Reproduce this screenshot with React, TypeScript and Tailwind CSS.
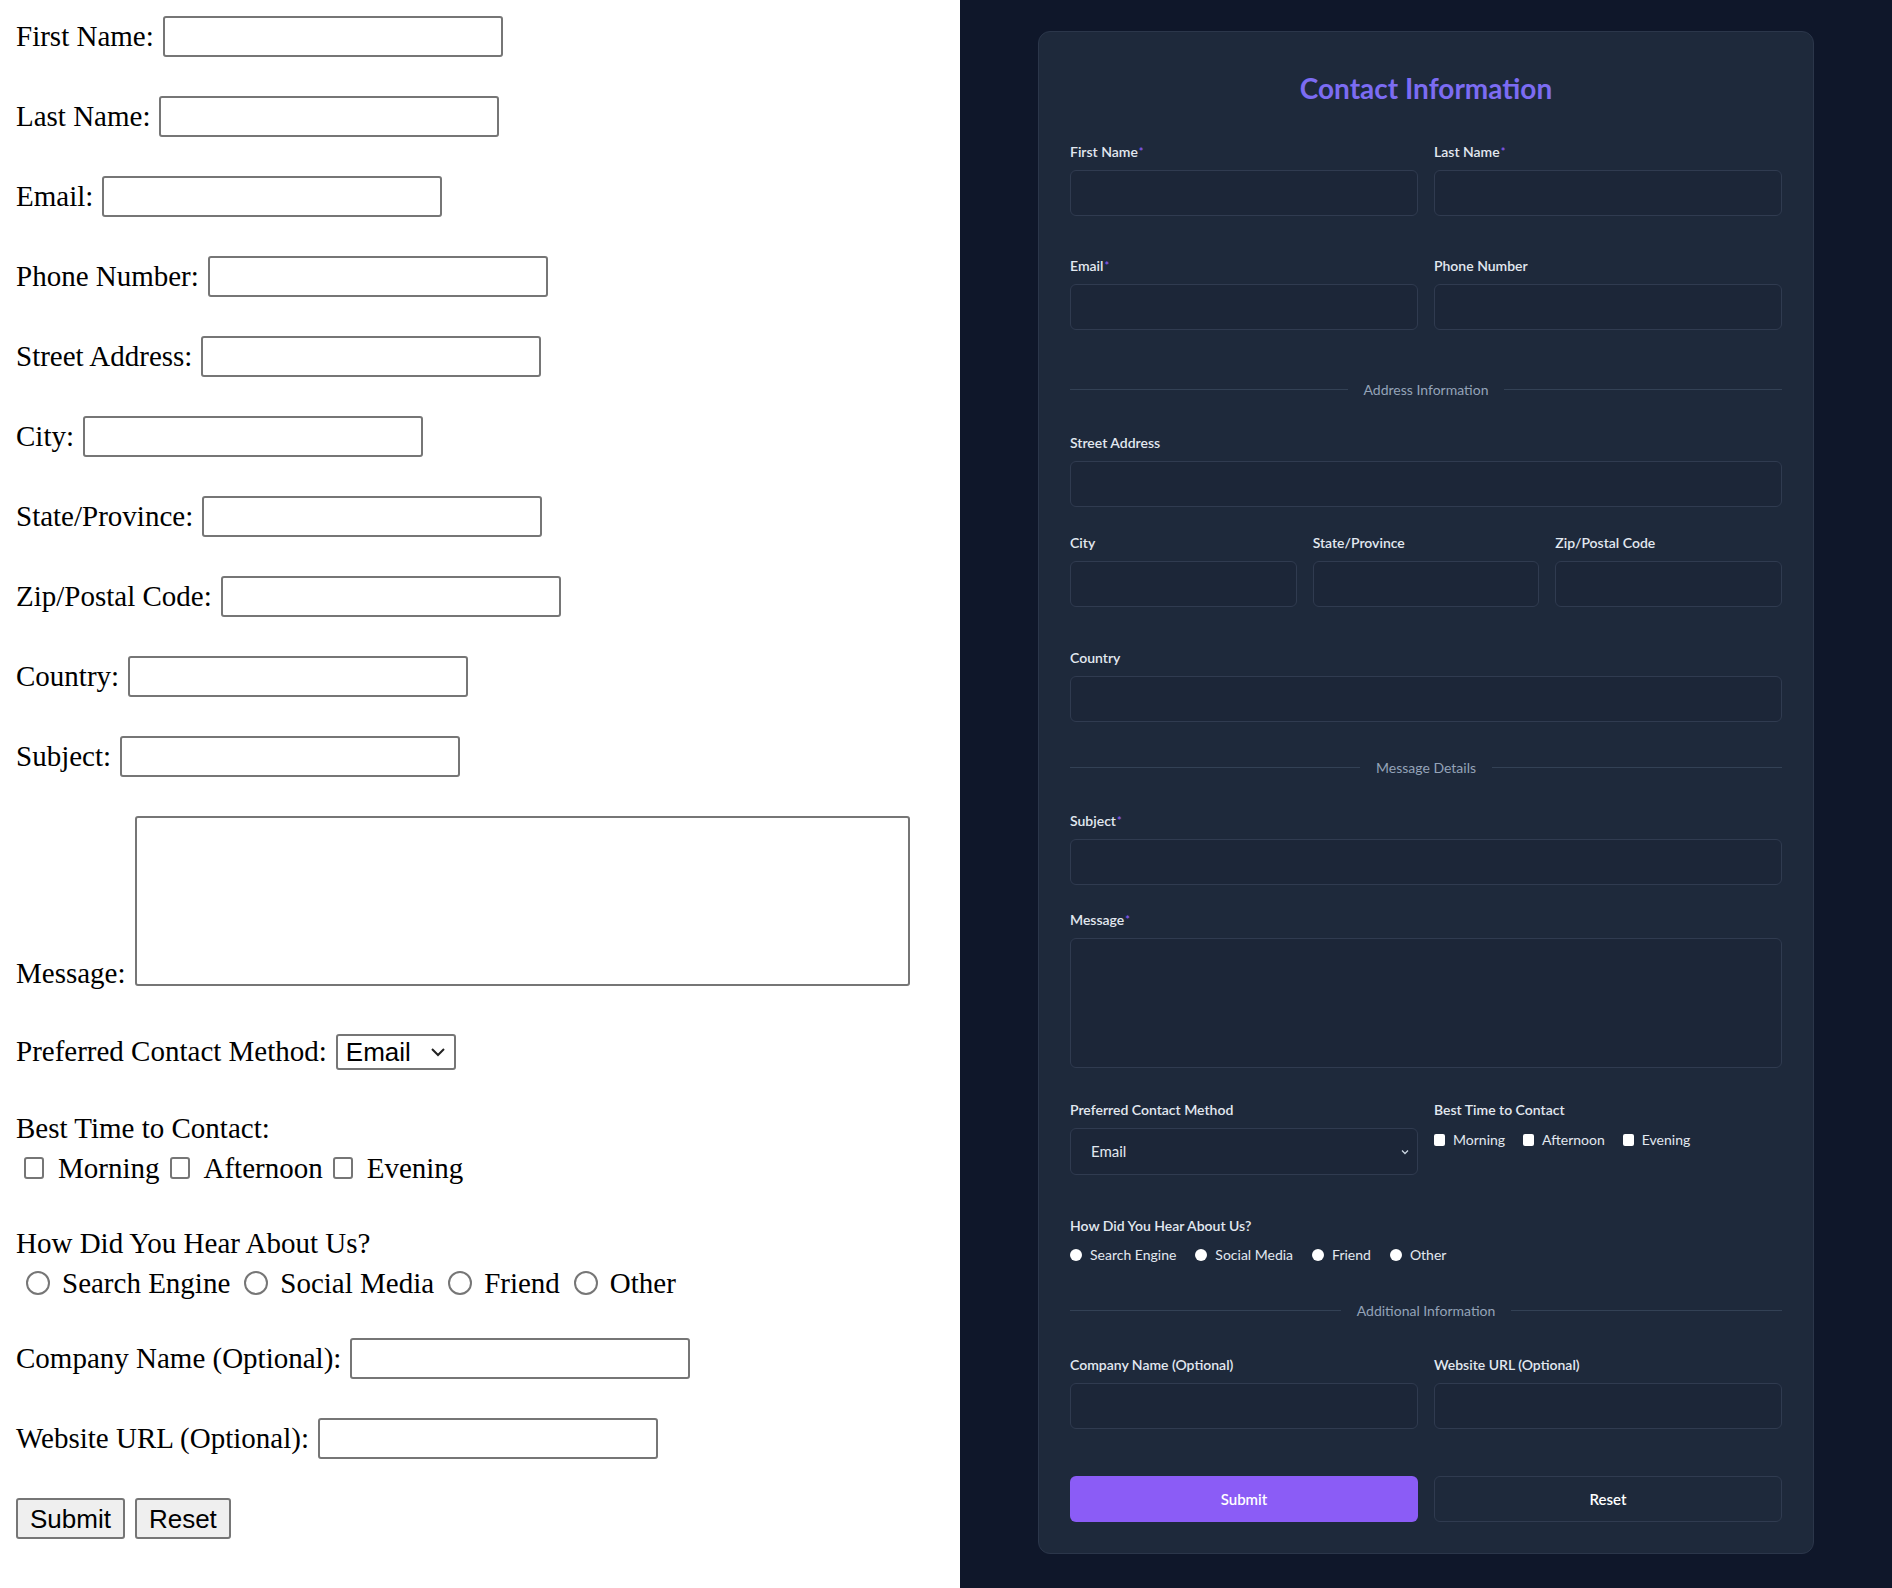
import React from "react";

const serif = { fontFamily: '"Liberation Serif", "Times New Roman", serif' };

function PlainRow({ label, width = 340, className = "" }: { label: string; width?: number; className?: string }) {
  return (
    <div className={`flex items-center h-[41px] mb-[39px] ${className}`}>
      <span className="text-[29px] text-black mr-[9px] whitespace-nowrap">{label}</span>
      <input className="h-[41px] border-2 border-[#767676] rounded-[3px] bg-white" style={{ width }} />
    </div>
  );
}

function PlainForm() {
  const rows = [
    "First Name:",
    "Last Name:",
    "Email:",
    "Phone Number:",
    "Street Address:",
    "City:",
    "State/Province:",
    "Zip/Postal Code:",
    "Country:",
    "Subject:",
  ];
  return (
    <div className="w-[960px] shrink-0 bg-white pl-[16px] pt-[16px] text-black" style={serif}>
      {rows.map((r) => (
        <PlainRow key={r} label={r} />
      ))}
      <div className="flex items-end mt-[1px]">
        <span className="text-[29px] mr-[9px] leading-[34px] mb-[-4px]">Message:</span>
        <textarea className="w-[775px] h-[170px] border-2 border-[#767676] rounded-[3px] resize-none" />
      </div>
      <div className="flex items-center mt-[48px] h-[36px]">
        <span className="text-[29px] mr-[9px]">Preferred Contact Method:</span>
        <div
          className="h-[36px] w-[120px] border-2 border-[#767676] rounded-[3px] flex items-center justify-between px-[8px] text-[26px]"
          style={{ fontFamily: '"Liberation Sans", Arial, sans-serif' }}
        >
          <span>Email</span>
          <svg width="16" height="10" viewBox="0 0 16 10" fill="none" stroke="#222" strokeWidth="2">
            <path d="M2 2l6 6 6-6" />
          </svg>
        </div>
      </div>
      <div className="mt-[38px] text-[29px] leading-[40px]">Best Time to Contact:</div>
      <div className="flex items-center text-[29px] leading-[40px]">
        {["Morning", "Afternoon", "Evening"].map((t) => (
          <span key={t} className="flex items-center">
            <span className="inline-block w-[20px] h-[22px] border-2 border-[#767676] rounded-[3px] ml-[8px] mr-[14px]" />
            <span className="mr-[2px]">{t}</span>
          </span>
        ))}
      </div>
      <div className="mt-[35px] text-[29px] leading-[40px]">How Did You Hear About Us?</div>
      <div className="flex items-center text-[29px] leading-[40px]">
        {["Search Engine", "Social Media", "Friend", "Other"].map((t) => (
          <span key={t} className="flex items-center">
            <span className="inline-block w-[24px] h-[24px] border-2 border-[#767676] rounded-full ml-[10px] mr-[12px]" />
            <span className="mr-[4px]">{t}</span>
          </span>
        ))}
      </div>
      <div className="mt-[35px]">
        <PlainRow label="Company Name (Optional):" />
        <PlainRow label="Website URL (Optional):" />
      </div>
      <div className="flex gap-[10px] mt-[0px]" style={{ fontFamily: '"Liberation Sans", Arial, sans-serif' }}>
        <button className="h-[41px] px-[12px] border-2 border-[#767676] rounded-[3px] bg-[#efefef] text-[26px]">Submit</button>
        <button className="h-[41px] px-[12px] border-2 border-[#767676] rounded-[3px] bg-[#efefef] text-[26px]">Reset</button>
      </div>
    </div>
  );
}

function Label({ text, req = false }: { text: string; req?: boolean }) {
  return (
    <div className="h-[20px] leading-[20px] text-[14px] font-semibold text-[#e2e8f0] mb-[8px]">
      {text}
      {req && <span className="text-[#8b5cf6] text-[11px] align-top ml-[1px]">*</span>}
    </div>
  );
}

function Field({ text, req = false, h = 46 }: { text: string; req?: boolean; h?: number }) {
  return (
    <div className="flex flex-col">
      <Label text={text} req={req} />
      <div className="w-full rounded-[6px] border border-[#303b50] bg-[#1c2638]" style={{ height: h }} />
    </div>
  );
}

function Divider({ text, className = "" }: { text: string; className?: string }) {
  return (
    <div className={`flex items-center h-[20px] ${className}`}>
      <div className="flex-1 h-px bg-[#334155]" />
      <span className="px-[16px] text-[14px] text-[#94a3b8]">{text}</span>
      <div className="flex-1 h-px bg-[#334155]" />
    </div>
  );
}

function DarkForm() {
  return (
    <div className="flex-1 bg-[#0f172a] min-h-[1588px] pt-[31px] pl-[78px]">
      <div
        className="w-[776px] rounded-[12px] border border-[#2b364a] bg-[#1e293b] px-[31px] pt-[38px] pb-[31px] flex flex-col"
        style={{ fontFamily: 'Lato, "Noto Sans", sans-serif' }}
      >
        <h1 className="text-center text-[28px] leading-[36px] font-bold text-[#7c6cf2]">Contact Information</h1>
        <div className="grid grid-cols-2 gap-x-[16px] gap-y-[40px] mt-[36px]">
          <Field text="First Name" req />
          <Field text="Last Name" req />
          <Field text="Email" req />
          <Field text="Phone Number" />
        </div>
        <Divider text="Address Information" className="mt-[49px]" />
        <div className="mt-[34px]">
          <Field text="Street Address" />
        </div>
        <div className="grid grid-cols-3 gap-x-[16px] mt-[26px]">
          <Field text="City" />
          <Field text="State/Province" />
          <Field text="Zip/Postal Code" />
        </div>
        <div className="mt-[41px]">
          <Field text="Country" />
        </div>
        <Divider text="Message Details" className="mt-[35px]" />
        <div className="mt-[34px]">
          <Field text="Subject" req />
        </div>
        <div className="mt-[25px]">
          <Field text="Message" req h={130} />
        </div>
        <div className="grid grid-cols-2 gap-x-[16px] mt-[32px]">
          <div className="flex flex-col">
            <Label text="Preferred Contact Method" />
            <div className="h-[47px] rounded-[6px] border border-[#303b50] bg-[#1c2638] flex items-center justify-between pl-[20px] pr-[8px] text-[15px] text-[#e2e8f0]">
              <span>Email</span>
              <svg width="8" height="6" viewBox="0 0 8 6" fill="none" stroke="#cbd5e1" strokeWidth="1.3">
                <path d="M1 1.5l3 3 3-3" />
              </svg>
            </div>
          </div>
          <div className="flex flex-col">
            <Label text="Best Time to Contact" />
            <div className="flex items-center gap-[18px] text-[14px] text-[#e2e8f0] mt-[1px]">
              {["Morning", "Afternoon", "Evening"].map((t) => (
                <span key={t} className="flex items-center gap-[8px]">
                  <span className="w-[11px] h-[12px] bg-white rounded-[2px]" />
                  {t}
                </span>
              ))}
            </div>
          </div>
        </div>
        <div className="mt-[41px]">
          <Label text="How Did You Hear About Us?" />
          <div className="flex items-center gap-[19px] text-[14px] text-[#e2e8f0] mt-[2px]">
            {["Search Engine", "Social Media", "Friend", "Other"].map((t) => (
              <span key={t} className="flex items-center gap-[8px]">
                <span className="w-[12px] h-[12px] bg-white rounded-full" />
                {t}
              </span>
            ))}
          </div>
        </div>
        <Divider text="Additional Information" className="mt-[35px]" />
        <div className="grid grid-cols-2 gap-x-[16px] mt-[35px]">
          <Field text="Company Name (Optional)" />
          <Field text="Website URL (Optional)" />
        </div>
        <div className="grid grid-cols-2 gap-x-[16px] mt-[47px]">
          <button className="h-[46px] rounded-[6px] bg-[#8b5cf6] text-white text-[15px] font-semibold">Submit</button>
          <button className="h-[46px] rounded-[6px] border border-[#303b50] bg-[#1e293b] text-white text-[15px] font-semibold">
            Reset
          </button>
        </div>
      </div>
    </div>
  );
}

export default function App() {
  return (
    <div className="flex w-[1892px] min-h-[1588px]">
      <PlainForm />
      <DarkForm />
    </div>
  );
}
